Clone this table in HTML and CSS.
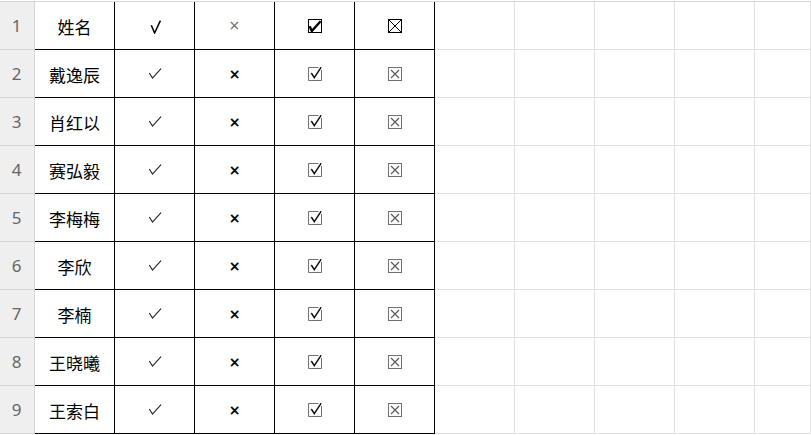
FILE: index.html
```html
<!DOCTYPE html>
<html lang="zh">
<head>
<meta charset="utf-8">
<title>Sheet</title>
<link rel="stylesheet" href="styles.css">
</head>
<body>
<div class="sheet" id="sheet"></div>
<script src="app.js"></script>
</body>
</html>
```
FILE: app.js
```js
const names = ["姓名","戴逸辰","肖红以","赛弘毅","李梅梅","李欣","李楠","王晓曦","王索白"];
const sqrt = '<svg class="sym sq" width="12" height="14" viewBox="0 0 12 14" role="img" aria-label="√"><path d="M1.3 5.2 L4.6 13 L10.4 0.6" fill="none" stroke="#000" stroke-width="1.5"/></svg>';
const tick = '<svg class="sym tk" width="14" height="11" viewBox="0 0 14 11" role="img" aria-label="✓"><path d="M1.3 5 L4.5 10 L13 0.6" fill="none" stroke="#222" stroke-width="1.1"/></svg>';
const hdrCheckBox = '<svg class="box" width="14" height="14" viewBox="0 0 14 14"><rect x="0.5" y="0.5" width="13" height="13" fill="none" stroke="#000"/><path d="M1.6 7.2 L3.8 12 L12.6 2.2" fill="none" stroke="#000" stroke-width="2.4" stroke-linejoin="miter"/></svg>';
const hdrXBox = '<svg class="box" width="14" height="14" viewBox="0 0 14 14"><rect x="0.5" y="0.5" width="13" height="13" fill="none" stroke="#000"/><path d="M1 1 L13 13 M13 1 L1 13" stroke="#000" stroke-width="1"/></svg>';
const rowCheckBox = '<svg class="box" width="14" height="14" viewBox="0 0 14 14"><path d="M10.5 0.5 H0.5 V13.5 H13.5 V3" fill="none" stroke="#707070"/><path d="M3.3 6 L6.3 10.6 L13.2 0.2" fill="none" stroke="#111" stroke-width="1.5"/></svg>';
const rowXBox = '<svg class="box" width="14" height="14" viewBox="0 0 14 14"><rect x="0.5" y="0.5" width="13" height="13" fill="none" stroke="#707070"/><path d="M3 3 L11 11 M11 3 L3 11" stroke="#555" stroke-width="1.1"/></svg>';
const sheet = document.getElementById('sheet');
let html = '';
names.forEach((n, i) => {
  const h = i === 0;
  html += '<div class="rh">' + (i + 1) + '</div>';
  html += '<div class="c name">' + n + '</div>';
  html += '<div class="c">' + (h ? sqrt : tick) + '</div>';
  html += h ? '<div class="c"><span class="xh">×</span></div>' : '<div class="c"><span class="xr">×</span></div>';
  html += '<div class="c">' + (h ? hdrCheckBox : rowCheckBox) + '</div>';
  html += '<div class="c">' + (h ? hdrXBox : rowXBox) + '</div>';
  for (let k = 0; k < 5; k++) html += '<div class="e"></div>';
});
sheet.innerHTML = html;
```
FILE: styles.css
```css
html, body {
  margin: 0;
  padding: 0;
  background: #fff;
}
body {
  font-family: "Noto Sans CJK SC", "Noto Sans", sans-serif;
  overflow: hidden;
}
.sheet {
  margin-top: 1px;
  border-top: 1px solid #d6d6d6;
  display: grid;
  grid-template-columns: 35px repeat(9, 80px) 1fr;
  grid-auto-rows: 48px;
}
.rh {
  background: #efefef;
  border-right: 1px solid #d4d4d4;
  border-bottom: 1px solid #d4d4d4;
  color: #666;
  font-family: "Noto Sans", "Open Sans", sans-serif;
  font-size: 17px;
  display: flex;
  align-items: center;
  justify-content: center;
  padding-right: 1px;
}
.c {
  border-right: 1px solid #000;
  border-bottom: 1px solid #000;
  display: flex;
  align-items: center;
  justify-content: center;
  color: #000;
}
.e {
  border-right: 1px solid #e1e1e1;
  border-bottom: 1px solid #e1e1e1;
}
.name {
  font-size: 17px;
  padding-top: 2px;
}
.sym {
  display: block;
}
.sq {
  margin-top: 2px;
  margin-left: 2px;
}
.tk {
  margin-left: 1px;
}
.xh {
  font-family: "Noto Sans", sans-serif;
  font-size: 18px;
  color: #777;
  line-height: 1;
  margin-top: -1px;
}
.xr {
  font-family: "DejaVu Sans", sans-serif;
  font-size: 14px;
  font-weight: bold;
  line-height: 1;
  margin-top: 1px;
}
.box {
  display: block;
}
```
